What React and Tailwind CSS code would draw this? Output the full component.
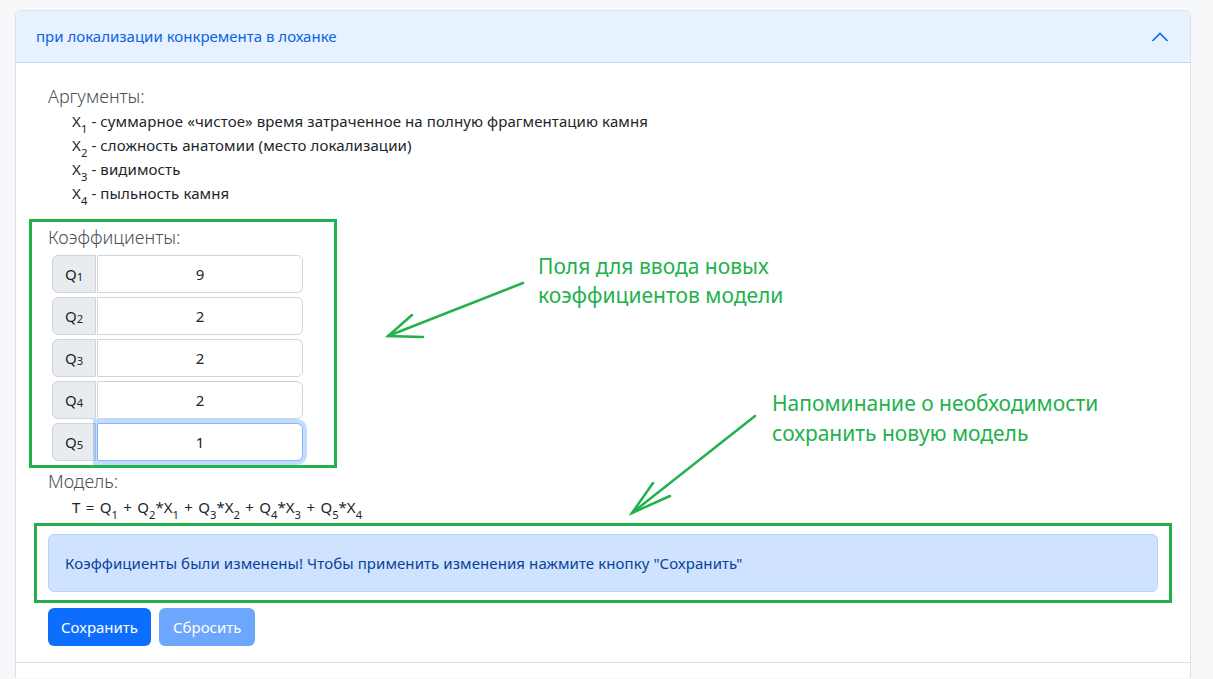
import React from "react";

const font = { fontFamily: '"Noto Sans", "Open Sans", sans-serif' };

function Sub({ children }) {
  return <sub className="text-[0.75em] align-[-0.3em] leading-none">{children}</sub>;
}

function QRow({ n, value, focused }) {
  return (
    <div className="flex h-[38px] w-[251px] gap-[1px]">
      <div className="flex w-[44px] items-center justify-center rounded-l-md border border-[#ced4da] bg-[#e9ecef] text-[15px] text-[#212529]">
        Q<Sub>{n}</Sub>
      </div>
      <div
        className={
          "flex flex-1 items-center justify-center rounded-r-md border bg-white text-[15px] text-[#212529] " +
          (focused
            ? "border-[#86b7fe] shadow-[0_0_0_4px_rgba(13,110,253,0.25)]"
            : "border-[#ced4da]")
        }
      >
        {value}
      </div>
    </div>
  );
}

export default function App() {
  return (
    <div className="relative min-h-[679px] w-full overflow-hidden bg-[#f7f8fa] pl-[15px] pt-[10px]" style={font}>
      <div className="w-[1176px] rounded-t-md border border-b-0 border-[#dee2e6] bg-white">
        {/* header */}
        <div className="flex h-[52px] items-center justify-between rounded-t-md border-b border-[#c9d6ea] bg-[#e7f1ff] pl-[20px] pr-[21px]">
          <span className="text-[15px] text-[#0c63e4]">при локализации конкремента в лоханке</span>
          <svg width="18" height="12" viewBox="0 0 18 12" fill="none">
            <path d="M1.5 10 L9 2.5 L16.5 10" stroke="#0c63e4" strokeWidth="1.6" />
          </svg>
        </div>
        {/* body */}
        <div className="px-[32px] pb-[16px] pt-[20px] text-[#212529]">
          <div className="h-[27px] text-[18px] font-light leading-[27px] text-[#495057]">Аргументы:</div>
          <div className="pl-[24px] text-[15px] leading-[24px] tracking-[0.1px]">
            <div className="-mt-[1px]">X<Sub>1</Sub> - суммарное «чистое» время затраченное на полную фрагментацию камня</div>
            <div>X<Sub>2</Sub> - сложность анатомии (место локализации)</div>
            <div>X<Sub>3</Sub> - видимость</div>
            <div>X<Sub>4</Sub> - пыльность камня</div>
          </div>
          <div className="mt-[19px] h-[27px] text-[18px] font-light leading-[27px] text-[#495057]">Коэффициенты:</div>
          <div className="mt-[4px] flex flex-col gap-[4px] pl-[4px]">
            <QRow n="1" value="9" />
            <QRow n="2" value="2" />
            <QRow n="3" value="2" />
            <QRow n="4" value="2" />
            <QRow n="5" value="1" focused />
          </div>
          <div className="mt-[7px] h-[27px] text-[18px] font-light leading-[27px] text-[#495057]">Модель:</div>
          <div className="pl-[24px] text-[15px] leading-[24px] [word-spacing:1.5px]">
            T = Q<Sub>1</Sub> + Q<Sub>2</Sub>*X<Sub>1</Sub> + Q<Sub>3</Sub>*X<Sub>2</Sub> + Q<Sub>4</Sub>*X<Sub>3</Sub> + Q<Sub>5</Sub>*X<Sub>4</Sub>
          </div>
          <div className="mt-[15px] rounded-md border border-[#b6d4fe] bg-[#cfe2ff] px-[16px] py-[16px] text-[15px] leading-[24px] tracking-[0.08px] text-[#084298]">
            Коэффициенты были изменены! Чтобы применить изменения нажмите кнопку "Сохранить"
          </div>
          <div className="mt-[16px] flex gap-[8px]">
            <button className="h-[38px] rounded-md bg-[#0d6efd] px-[13px] text-[15px] text-white">Сохранить</button>
            <button className="h-[38px] rounded-md bg-[#0d6efd] px-[14px] text-[15px] text-white opacity-60">Сбросить</button>
          </div>
        </div>
        <div className="h-[16px] border-t border-[#dee2e6]" />
      </div>

      {/* annotations overlay */}
      <svg className="pointer-events-none absolute left-0 top-0" width="1213" height="679">
        <rect x="30.5" y="220.5" width="305" height="246" fill="none" stroke="#22b14c" strokeWidth="3" />
        <rect x="35.5" y="524.5" width="1135" height="77" fill="none" stroke="#22b14c" strokeWidth="3" />
        <g stroke="#22b14c" strokeWidth="2.5" strokeLinecap="round" fill="none">
          <path d="M523 283 L388 336" />
          <path d="M412 315 L388 336 L423 337" />
          <path d="M755 416 L632 513" />
          <path d="M653 483 L632 513 L670 496" />
        </g>
      </svg>
      <div className="absolute left-[538px] top-[252px] text-[21px] leading-[29px] text-[#22b14c]">
        Поля для ввода новых
        <br />
        коэффициентов модели
      </div>
      <div className="absolute left-[772px] top-[388px] text-[21px] leading-[30px] text-[#22b14c]">
        Напоминание о необходимости
        <br />
        сохранить новую модель
      </div>
    </div>
  );
}
